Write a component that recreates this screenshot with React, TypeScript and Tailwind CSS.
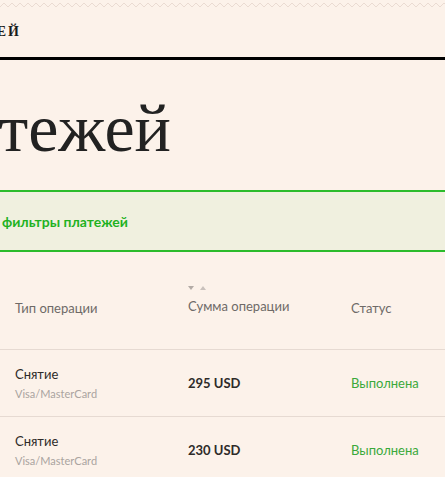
import React from "react";

const rows = [
  { type: "Снятие", method: "Visa/MasterCard", amount: "295 USD", status: "Выполнена" },
  { type: "Снятие", method: "Visa/MasterCard", amount: "230 USD", status: "Выполнена" },
  { type: "Снятие", method: "Visa/MasterCard", amount: "180 USD", status: "Выполнена" },
];

function Wave() {
  return (
    <svg className="block h-[8px] w-full" viewBox="0 0 445 8" preserveAspectRatio="none">
      <defs>
        <pattern id="wave" width="8" height="8" patternUnits="userSpaceOnUse">
          <path d="M0 6 L4 2 L8 6" fill="none" stroke="#eadbd2" strokeWidth="1" />
        </pattern>
      </defs>
      <rect width="445" height="8" fill="url(#wave)" />
    </svg>
  );
}

function SortArrows() {
  return (
    <div className="flex h-[6px] items-center gap-[6px]">
      <svg width="6" height="4" viewBox="0 0 6 4">
        <path d="M0 0 H6 L3 4 Z" fill="#b3aba6" />
      </svg>
      <svg width="6" height="4" viewBox="0 0 6 4">
        <path d="M0 4 H6 L3 0 Z" fill="#c9c1bc" />
      </svg>
    </div>
  );
}

export default function App() {
  return (
    <div className="h-[477px] w-[445px] overflow-hidden bg-[#fcf2ea] font-['Lato','Liberation_Sans',sans-serif]">
      <div className="pt-[1px]">
        <Wave />
      </div>

      {/* top nav, left part scrolled off */}
      <div className="flex h-[51px] items-center border-b-[3px] border-black pb-[3px]">
        <div className="flex w-[21px] justify-end overflow-hidden whitespace-nowrap">
          <span className="font-['Liberation_Serif',serif] text-[14px] font-bold tracking-[2px] text-[#1b1b1b]">
            ИСТОРИЯ ПЛАТЕЖЕЙ
          </span>
        </div>
      </div>

      <div className="flex h-[130px] items-center pt-[6px]">
        <div className="flex w-[171px] justify-end overflow-hidden whitespace-nowrap">
          <h1 className="font-['Liberation_Serif',serif] text-[68px] leading-none text-[#222]">
            История платежей
          </h1>
        </div>
      </div>

      <div className="flex h-[62px] items-center border-y-2 border-[#2cbc2c] bg-[#f0f0df]">
        <div className="flex w-[128px] justify-end overflow-hidden whitespace-nowrap">
          <span className="text-[14px] font-bold text-[#1fb21f]">Показать фильтры платежей</span>
        </div>
      </div>

      <table className="mt-[28px] w-full border-collapse text-[13px]">
        <thead>
          <tr className="h-[69px] border-b border-[#e6dad2] align-top text-[#6e6a67]">
            <th className="pl-[15px] pt-[19px] text-left font-normal">Тип операции</th>
            <th className="w-[163px] pt-[5px] text-left font-normal">
              <SortArrows />
              <div className="mt-[6px]">Сумма операции</div>
            </th>
            <th className="w-[94px] pt-[19px] text-left font-normal">Статус</th>
          </tr>
        </thead>
        <tbody>
          {rows.map((row, i) => (
            <tr key={i} className="h-[67px] border-b border-[#e6dad2]">
              <td className="pl-[15px] pt-[2px]">
                <div className="text-[#2e2b29]">{row.type}</div>
                <div className="mt-[1px] text-[11px] text-[#aaa4a0]">{row.method}</div>
              </td>
              <td className="pt-[2px] font-bold text-[#2e2b29]">{row.amount}</td>
              <td className="pt-[2px] text-[#3aa93a]">{row.status}</td>
            </tr>
          ))}
        </tbody>
      </table>
    </div>
  );
}
